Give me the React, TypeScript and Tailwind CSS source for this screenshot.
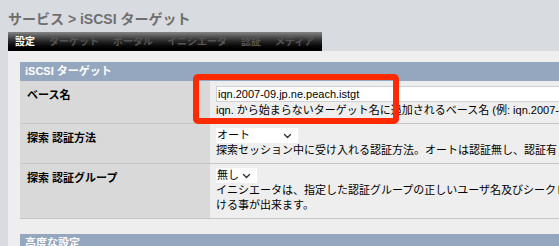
import React from "react";

const font = { fontFamily: '"Liberation Sans", "Noto Sans CJK JP", sans-serif' };

const tabs = ["設定", "ターゲット", "ポータル", "イニシエータ", "認証", "メディア"];

function Chevron() {
  return (
    <svg width="9" height="6" viewBox="0 0 9 6" fill="none" stroke="#333" strokeWidth="1.4" strokeLinecap="round" strokeLinejoin="round" aria-hidden>
      <path d="M1.5 1.5l3 3 3-3" />
    </svg>
  );
}

function Row({ label, children }: { label: string; children: React.ReactNode }) {
  return (
    <div className="flex border-b border-[#c6c6c6]">
      <div className="w-[190px] shrink-0 bg-[#d9d9d9] px-[7px] pt-[7px] text-[11px] font-bold leading-[15px] text-black">
        {label}
      </div>
      <div className="flex-1 bg-[#eeeeee] pb-[5px] pl-[6px] pt-[4px] text-[11px] leading-[15px] text-black">
        {children}
      </div>
    </div>
  );
}

export default function App() {
  return (
    <div className="relative h-[246px] w-[559px] overflow-hidden bg-[#d8dbe0]" style={font}>
      <h1 className="pl-[8px] pt-[9px] text-[14px] font-bold leading-[20px] text-[#6f6f6f]">
        サービス &gt; iSCSI ターゲット
      </h1>

      <div className="ml-[8px] mt-[3px] flex h-[19px] w-fit items-center gap-[14px] bg-gradient-to-b from-[#858585] via-[#252525] to-black pl-[7px] pr-[8px] text-[10px] font-bold">
        {tabs.map((t, i) => (
          <span key={t} className={i === 0 ? "text-white" : "text-[#555]"}>
            {t}
          </span>
        ))}
      </div>

      <div className="ml-[8px] w-[900px] bg-[#eeeeee] pl-[12px] pt-[11px]">
        <section className="w-[800px]">
          <div className="h-[19px] bg-[#95a6bf] pl-[5px] text-[11px] font-bold leading-[19px] text-white">
            iSCSI ターゲット
          </div>

          <Row label="ベース名">
            <div className="mt-[1px] h-[16px] w-[600px] border border-[#d0d0d0] bg-white pl-[1px] leading-[14px]">
              iqn.2007-09.jp.ne.peach.istgt
            </div>
            <div className="mt-[1px] whitespace-nowrap">
              iqn. から始まらないターゲット名に追加されるベース名 (例: iqn.2007-09.jp.ne.peach.istgt)
            </div>
          </Row>

          <Row label="探索 認証方法">
            <div className="flex h-[15px] w-[82px] items-center justify-between bg-white pl-[1px] pr-[6px] leading-[15px]">
              <span>オート</span>
              <Chevron />
            </div>
            <div className="whitespace-nowrap">
              探索セッション中に受け入れる認証方法。オートは認証無し、認証有りの両方を受け入れます。
            </div>
          </Row>

          <Row label="探索 認証グループ">
            <div className="flex h-[15px] w-[41px] items-center justify-between bg-white pl-[1px] pr-[6px] leading-[15px]">
              <span>無し</span>
              <Chevron />
            </div>
            <div className="whitespace-nowrap">
              イニシエータは、指定した認証グループの正しいユーザ名及びシークレットで認証を受
            </div>
            <div className="whitespace-nowrap">ける事が出来ます。</div>
          </Row>

          <div className="mt-[15px] h-[19px] bg-[#95a6bf] pl-[5px] text-[11px] font-bold leading-[19px] text-white">
            高度な設定
          </div>
        </section>
      </div>

      <div className="pointer-events-none absolute left-[193px] top-[74px] h-[50px] w-[206px] rounded-[5px] border-[6px] border-[#ff2a00]" />
    </div>
  );
}
